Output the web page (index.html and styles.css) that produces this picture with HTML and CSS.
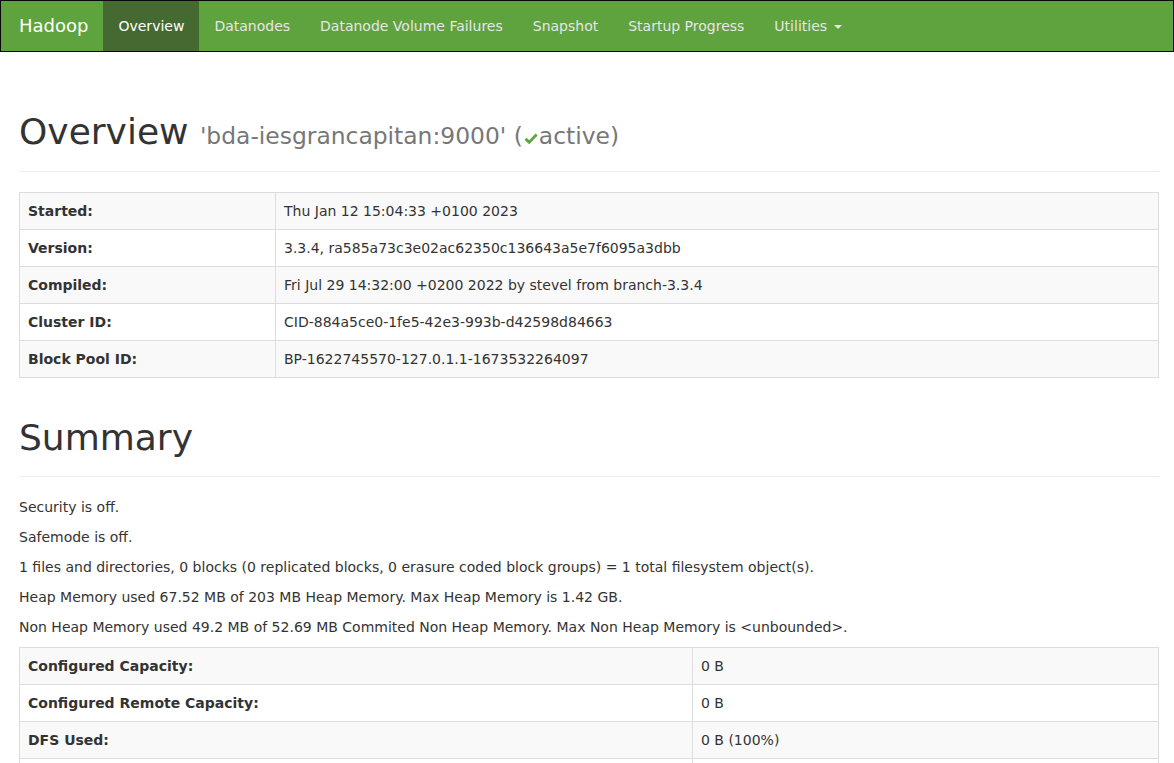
FILE: index.html
```
<!DOCTYPE html>
<html>
<head>
<meta charset="utf-8">
<title>Namenode information</title>
<link rel="stylesheet" href="styles.css">
</head>
<body>
<header class="navbar">
  <div class="nav-container">
    <a class="brand" href="#">Hadoop</a>
    <ul class="nav">
      <li class="active"><a href="#">Overview</a></li>
      <li><a href="#">Datanodes</a></li>
      <li><a href="#">Datanode Volume Failures</a></li>
      <li><a href="#">Snapshot</a></li>
      <li><a href="#">Startup Progress</a></li>
      <li><a href="#">Utilities <span class="caret"></span></a></li>
    </ul>
  </div>
</header>

<div class="container">
  <div class="page-header">
    <h1>Overview <small>'bda-iesgrancapitan:9000' (<svg class="ok" viewBox="0 0 14 12" width="14" height="12"><path d="M0.5 6.8 L2.6 4.8 L5.2 7.3 L11.6 0.6 L13.6 2.6 L5.2 11.2 Z" fill="#5ba53a"/></svg>active)</small></h1>
  </div>

  <table class="table info">
    <tbody>
      <tr><th>Started:</th><td>Thu Jan 12 15:04:33 +0100 2023</td></tr>
      <tr><th>Version:</th><td>3.3.4, ra585a73c3e02ac62350c136643a5e7f6095a3dbb</td></tr>
      <tr><th>Compiled:</th><td>Fri Jul 29 14:32:00 +0200 2022 by stevel from branch-3.3.4</td></tr>
      <tr><th>Cluster ID:</th><td>CID-884a5ce0-1fe5-42e3-993b-d42598d84663</td></tr>
      <tr><th>Block Pool ID:</th><td>BP-1622745570-127.0.1.1-1673532264097</td></tr>
    </tbody>
  </table>

  <div class="page-header">
    <h1>Summary</h1>
  </div>

  <p>Security is off.</p>
  <p>Safemode is off.</p>
  <p>1 files and directories, 0 blocks (0 replicated blocks, 0 erasure coded block groups) = 1 total filesystem object(s).</p>
  <p>Heap Memory used 67.52 MB of 203 MB Heap Memory. Max Heap Memory is 1.42 GB.</p>
  <p>Non Heap Memory used 49.2 MB of 52.69 MB Commited Non Heap Memory. Max Non Heap Memory is &lt;unbounded&gt;.</p>

  <table class="table summary">
    <tbody>
      <tr><th>Configured Capacity:</th><td>0 B</td></tr>
      <tr><th>Configured Remote Capacity:</th><td>0 B</td></tr>
      <tr><th>DFS Used:</th><td>0 B (100%)</td></tr>
      <tr><th>Non DFS Used:</th><td>0 B</td></tr>
      <tr><th>DFS Remaining:</th><td>0 B (0%)</td></tr>
      <tr><th>Block Pool Used:</th><td>0 B (100%)</td></tr>
      <tr><th>DataNodes usages% (Min/Median/Max/stdDev):</th><td>0.00% / 0.00% / 0.00% / 0.00%</td></tr>
    </tbody>
  </table>
</div>
</body>
</html>
```
FILE: styles.css
```
* {
  box-sizing: border-box;
}

html, body {
  margin: 0;
  padding: 0;
}

body {
  font-family: "DejaVu Sans", sans-serif;
  font-size: 14px;
  line-height: 20px;
  color: #333;
  background: #fff;
}

a {
  text-decoration: none;
}

.navbar {
  background-color: #5fa33e;
  border: 1px solid #080808;
  min-height: 52px;
  margin-bottom: 20px;
}

.nav-container {
  display: flex;
  padding: 0 3px;
}

.brand {
  display: block;
  height: 50px;
  padding: 15px;
  font-size: 18px;
  line-height: 20px;
  color: #fff;
}

.nav {
  display: flex;
  list-style: none;
  margin: 0;
  padding: 0;
}

.nav li a {
  display: block;
  padding: 15px;
  line-height: 20px;
  color: #e6e6e6;
}

.nav li.active a {
  background-color: #446a32;
  color: #fff;
}

.caret {
  display: inline-block;
  width: 0;
  height: 0;
  margin-left: 2px;
  vertical-align: middle;
  border-top: 4px solid #e6e6e6;
  border-left: 4px solid transparent;
  border-right: 4px solid transparent;
}

.container {
  display: flow-root;
  padding: 0 15px 0 19px;
}

.page-header {
  margin: 40px 0 20px;
  padding-bottom: 9px;
  border-bottom: 1px solid #eee;
}

h1 {
  margin: 0 0 10px;
  font-size: 36px;
  font-weight: 500;
  line-height: 1.1;
  color: #333;
}

h1 small {
  font-size: 65%;
  font-weight: normal;
  color: #777;
}

.ok {
  display: inline-block;
  vertical-align: baseline;
  margin: 0 1px 0 1px;
  position: relative;
  top: 1px;
}

p {
  margin: 0 0 10px;
}

.table {
  width: 100%;
  border-collapse: collapse;
  border: 1px solid #ddd;
  margin-bottom: 20px;
}

.table th,
.table td {
  padding: 8px;
  border: 1px solid #ddd;
  text-align: left;
  vertical-align: top;
  line-height: 20px;
}

.table th {
  font-weight: bold;
}

.table tr:nth-child(odd) {
  background-color: #f9f9f9;
}

.info th {
  width: 256px;
}

.summary th {
  width: 673px;
}
```
